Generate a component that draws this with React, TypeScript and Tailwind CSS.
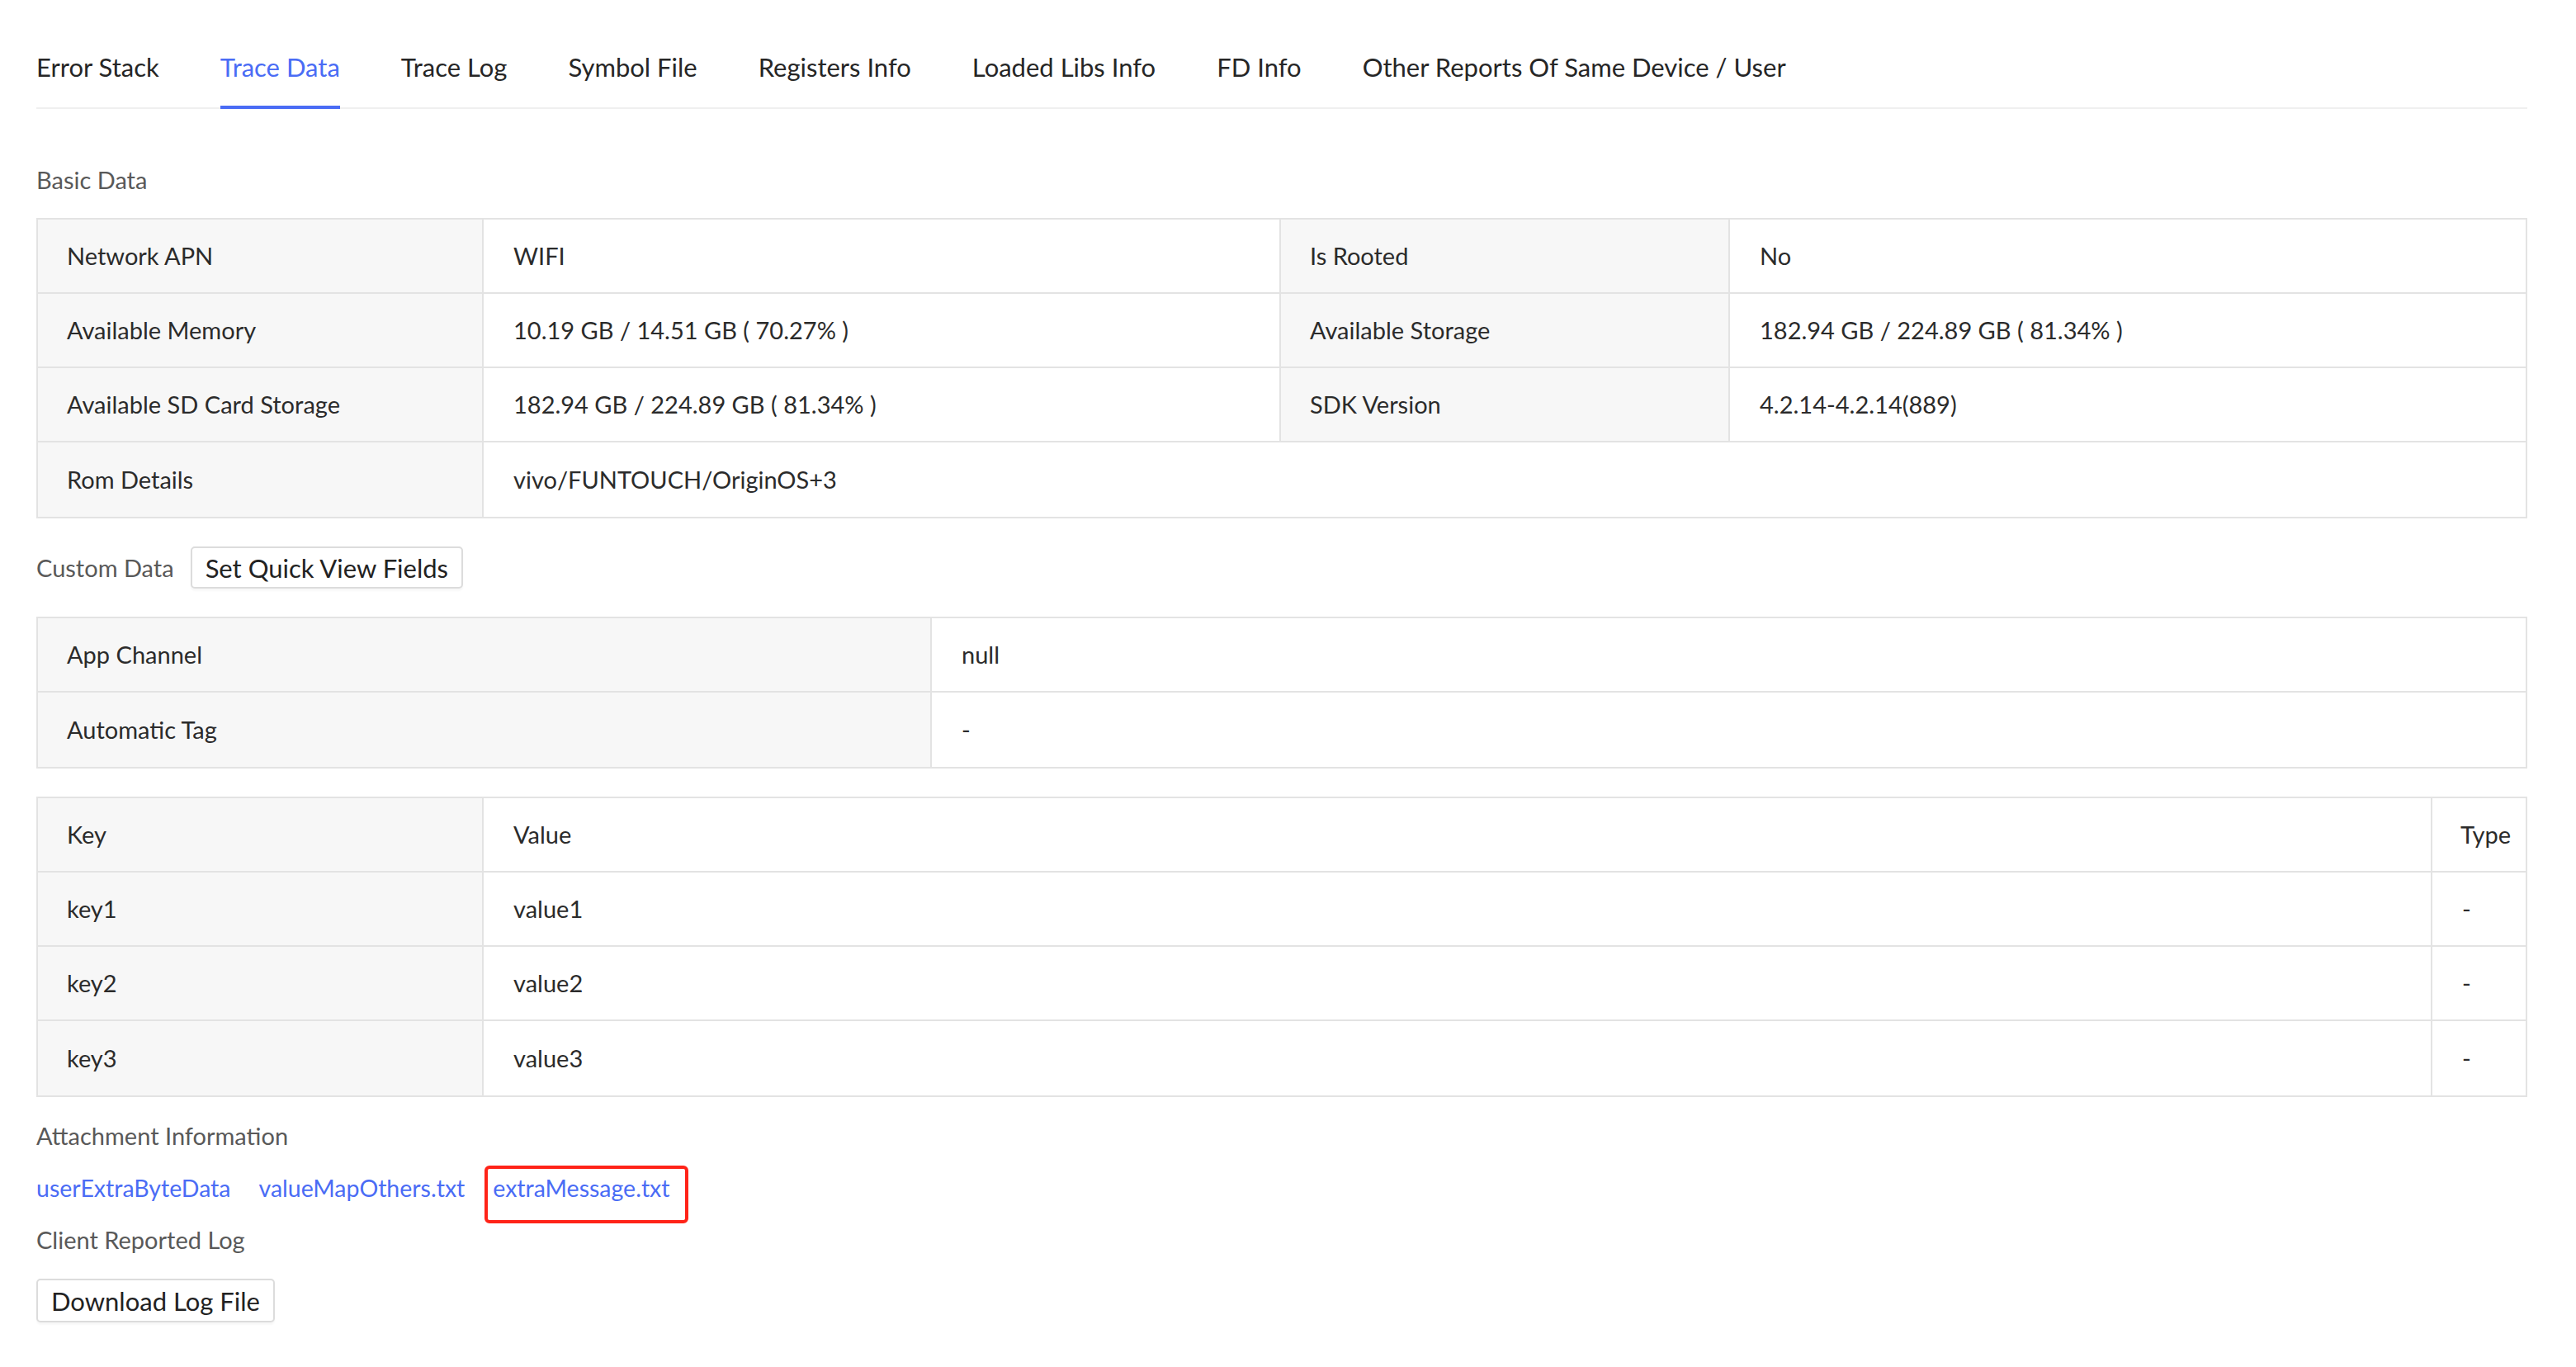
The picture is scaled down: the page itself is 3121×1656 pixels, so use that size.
import React from "react";

const tabs = [
  "Error Stack",
  "Trace Data",
  "Trace Log",
  "Symbol File",
  "Registers Info",
  "Loaded Libs Info",
  "FD Info",
  "Other Reports Of Same Device / User",
];

function LabelCell({ children, last }: { children: React.ReactNode; last?: boolean }) {
  return (
    <div
      className={
        "flex items-center bg-[#f7f7f7] pl-[35px] text-[29px] text-[#2b2b2b] " +
        (last ? "" : "border-r-2 border-[#e3e3e3]")
      }
    >
      {children}
    </div>
  );
}

function ValueCell({ children, last, span }: { children: React.ReactNode; last?: boolean; span?: boolean }) {
  return (
    <div
      className={
        "flex items-center bg-white pl-[36px] text-[29px] text-[#2b2b2b] " +
        (last ? "" : "border-r-2 border-[#e3e3e3] ") +
        (span ? "col-span-3" : "")
      }
    >
      {children}
    </div>
  );
}

export default function App() {
  const basicRows: [string, string, string?, string?][] = [
    ["Network APN", "WIFI", "Is Rooted", "No"],
    ["Available Memory", "10.19 GB / 14.51 GB ( 70.27% )", "Available Storage", "182.94 GB / 224.89 GB ( 81.34% )"],
    ["Available SD Card Storage", "182.94 GB / 224.89 GB ( 81.34% )", "SDK Version", "4.2.14-4.2.14(889)"],
    ["Rom Details", "vivo/FUNTOUCH/OriginOS+3"],
  ];
  const kvRows = [
    ["key1", "value1", "-"],
    ["key2", "value2", "-"],
    ["key3", "value3", "-"],
  ];
  return (
    <div className="min-h-screen bg-white font-['Lato','Liberation_Sans',sans-serif] text-[#333]">
      <div className="ml-[44px] w-[3018px] pb-[40px]">
        {/* Tabs */}
        <div className="flex gap-[74px] border-b-2 border-[#efefef]">
          {tabs.map((t, i) => (
            <div
              key={t}
              className={
                "relative whitespace-nowrap pt-[63px] pb-[30px] text-[31px] leading-[37px] " +
                (i === 1 ? "text-[#4a6cf5]" : "text-[#262626]")
              }
            >
              {t}
              {i === 1 && <div className="absolute left-0 right-0 bottom-[-2px] h-[4px] bg-[#4a6cf5]" />}
            </div>
          ))}
        </div>

        {/* Basic Data */}
        <div className="mt-[68px] text-[29px] leading-[36px] text-[#595959]">Basic Data</div>
        <div className="mt-[28px] border-2 border-[#e3e3e3]">
          {basicRows.map((r, i) => (
            <div
              key={r[0]}
              className={
                "grid h-[90px] grid-cols-[540px_966px_544px_1fr] " +
                (i < basicRows.length - 1 ? "border-b-2 border-[#e3e3e3]" : "")
              }
            >
              <LabelCell>{r[0]}</LabelCell>
              {r[2] !== undefined ? (
                <>
                  <ValueCell>{r[1]}</ValueCell>
                  <LabelCell>{r[2]}</LabelCell>
                  <ValueCell last>{r[3]}</ValueCell>
                </>
              ) : (
                <ValueCell last span>
                  {r[1]}
                </ValueCell>
              )}
            </div>
          ))}
        </div>

        {/* Custom Data */}
        <div className="mt-[34px] flex items-center gap-[20px]">
          <span className="text-[29px] leading-[36px] text-[#595959]">Custom Data</span>
          <button className="flex h-[51px] items-center rounded-[5px] border-2 border-[#dcdcdc] bg-white px-[16px] text-[31px] leading-[40px] text-[#222] shadow-[0_3px_2px_rgba(0,0,0,0.03)]">
            Set Quick View Fields
          </button>
        </div>
        <div className="mt-[34px] border-2 border-[#e3e3e3]">
          <div className="grid h-[90px] grid-cols-[1083px_1fr] border-b-2 border-[#e3e3e3]">
            <LabelCell>App Channel</LabelCell>
            <ValueCell last>null</ValueCell>
          </div>
          <div className="grid h-[90px] grid-cols-[1083px_1fr]">
            <LabelCell>Automatic Tag</LabelCell>
            <ValueCell last>-</ValueCell>
          </div>
        </div>

        {/* Key Value Type */}
        <div className="mt-[34px] border-2 border-[#e3e3e3]">
          <div className="grid h-[90px] grid-cols-[540px_1fr_113px] border-b-2 border-[#e3e3e3]">
            <LabelCell>Key</LabelCell>
            <ValueCell>Value</ValueCell>
            <div className="flex items-center bg-white pl-[34px] text-[29px] text-[#2b2b2b]">Type</div>
          </div>
          {kvRows.map((r, i) => (
            <div
              key={r[0]}
              className={
                "grid h-[90px] grid-cols-[540px_1fr_113px] " +
                (i < kvRows.length - 1 ? "border-b-2 border-[#e3e3e3]" : "")
              }
            >
              <LabelCell>{r[0]}</LabelCell>
              <ValueCell>{r[1]}</ValueCell>
              <div className="flex items-center bg-white pl-[36px] text-[29px] text-[#2b2b2b]">{r[2]}</div>
            </div>
          ))}
        </div>

        {/* Attachment */}
        <div className="mt-[29px] text-[29px] leading-[36px] text-[#595959]">Attachment Information</div>
        <div className="mt-[27px] flex gap-[34px] text-[28.5px] leading-[36px] text-[#4a6cf5]">
          <a className="cursor-pointer">userExtraByteData</a>
          <a className="cursor-pointer">valueMapOthers.txt</a>
          <a className="relative cursor-pointer">
            extraMessage.txt
            <span className="pointer-events-none absolute left-[-10px] right-[-22px] top-[-9px] bottom-[-25px] rounded-[6px] border-[4px] border-[#ff2318]" />
          </a>
        </div>
        <div className="mt-[27px] text-[29px] leading-[36px] text-[#595959]">Client Reported Log</div>
        <div className="mt-[29px] flex">
          <button className="flex h-[53px] items-center rounded-[5px] border-2 border-[#dcdcdc] bg-white px-[16px] text-[31px] leading-[40px] text-[#222] shadow-[0_3px_2px_rgba(0,0,0,0.03)]">
            Download Log File
          </button>
        </div>
      </div>
    </div>
  );
}
